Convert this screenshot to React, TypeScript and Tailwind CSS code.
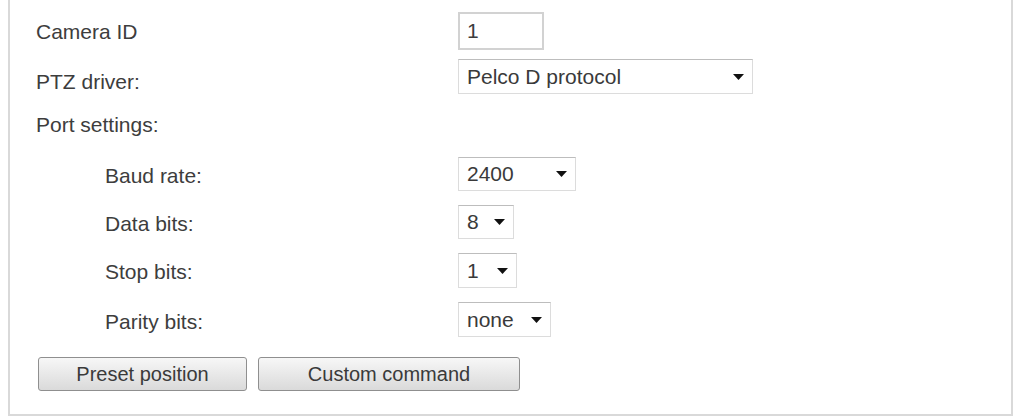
import React from "react";

const font = { fontFamily: '"Liberation Sans", Arial, sans-serif' };

function Caret() {
  return (
    <svg width="11" height="6" viewBox="0 0 11 6" className="shrink-0">
      <path d="M0 0 H11 L5.5 6 Z" fill="#111" />
    </svg>
  );
}

function Dropdown({ value, width }: { value: string; width: string }) {
  return (
    <div
      className={`${width} h-full flex items-center justify-between pl-[8px] pr-[8px] bg-white border border-[#dcdcdc] border-t-[#bdbdbd] text-[21px] text-[#3a3a3a]`}
    >
      <span>{value}</span>
      <Caret />
    </div>
  );
}

function Row({
  label,
  indent,
  className,
  labelClass,
  children,
}: {
  label?: string;
  indent?: boolean;
  className: string;
  labelClass?: string;
  children?: React.ReactNode;
}) {
  return (
    <div className={`flex items-center ${className}`}>
      <div className={`w-[422px] shrink-0 ${indent ? "pl-[69px]" : ""} ${labelClass ?? ""}`}>{label}</div>
      <div className="h-full flex">{children}</div>
    </div>
  );
}

export default function App() {
  return (
    <div className="w-[1015px] h-[417px] bg-white" style={font}>
      <div className="ml-[8px] w-[1005px] h-[416px] border-l-2 border-r-2 border-b-2 border-[#d9d9d9] pl-[26px] pt-[12px] text-[21px] text-[#3d3d3d]">
        <Row label="Camera ID" className="h-[38px]" labelClass="pt-[2px]">
          <div className="w-[86px] h-full border-2 border-[#d2d2d2] pl-[7px] flex items-center bg-white">1</div>
        </Row>
        <Row label="PTZ driver:" className="h-[35px] mt-[9px]" labelClass="pt-[11px]">
          <Dropdown value="Pelco D protocol" width="w-[295px]" />
        </Row>
        <Row label="Port settings:" className="h-[35px] mt-[13px]" />
        <Row label="Baud rate:" indent className="h-[34px] mt-[15px]" labelClass="pt-[3px]">
          <Dropdown value="2400" width="w-[118px]" />
        </Row>
        <Row label="Data bits:" indent className="h-[34px] mt-[14px]" labelClass="pt-[3px]">
          <Dropdown value="8" width="w-[56px]" />
        </Row>
        <Row label="Stop bits:" indent className="h-[35px] mt-[14px]" labelClass="pt-[3px]">
          <Dropdown value="1" width="w-[59px]" />
        </Row>
        <Row label="Parity bits:" indent className="h-[35px] mt-[14px]" labelClass="pt-[4px]">
          <Dropdown value="none" width="w-[93px]" />
        </Row>
        <div className="flex gap-[11px] mt-[20px] pl-[2px]">
          <button className="w-[209px] h-[34px] rounded-[3px] border border-[#8f8f8f] bg-gradient-to-b from-[#f7f7f7] to-[#dadada] text-[20px] text-[#3a3a3a]">
            Preset position
          </button>
          <button className="w-[262px] h-[34px] rounded-[3px] border border-[#8f8f8f] bg-gradient-to-b from-[#f7f7f7] to-[#dadada] text-[20px] text-[#3a3a3a]">
            Custom command
          </button>
        </div>
      </div>
    </div>
  );
}
